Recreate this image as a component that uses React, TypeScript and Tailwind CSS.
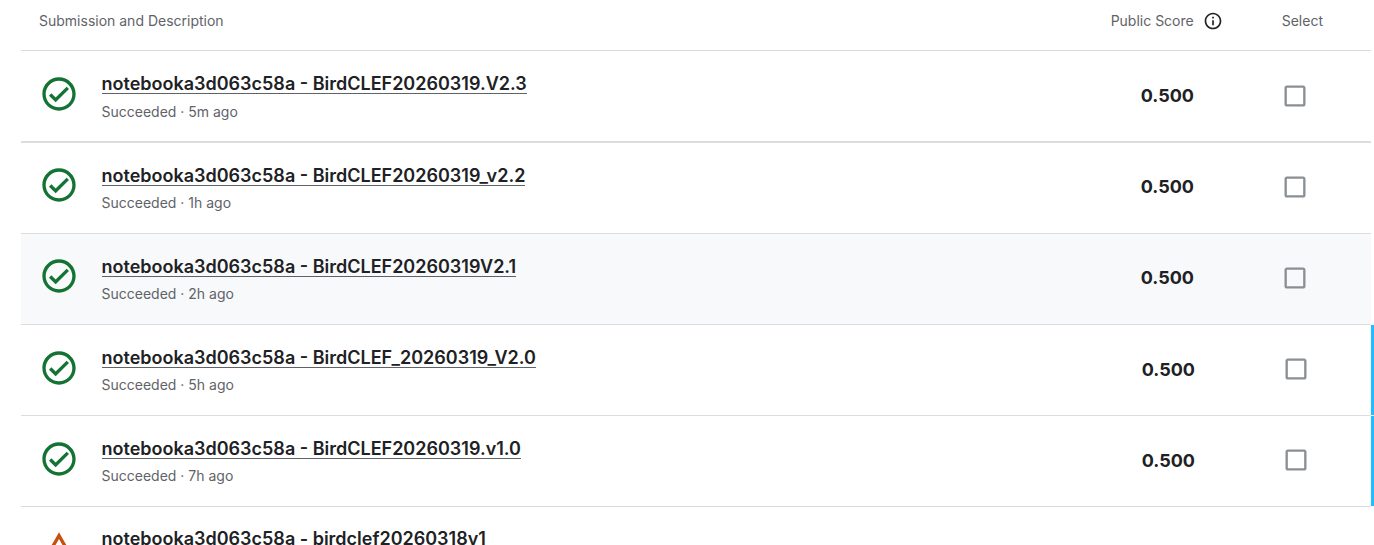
const rows = [
  { title: "notebooka3d063c58a - BirdCLEF20260319.V2.3", time: "5m ago", first: true },
  { title: "notebooka3d063c58a - BirdCLEF20260319_v2.2", time: "1h ago" },
  { title: "notebooka3d063c58a - BirdCLEF20260319V2.1", time: "2h ago", hover: true },
  { title: "notebooka3d063c58a - BirdCLEF_20260319_V2.0", time: "5h ago", isNew: true },
  { title: "notebooka3d063c58a - BirdCLEF20260319.v1.0", time: "7h ago", isNew: true },
];

function CheckCircle() {
  return (
    <svg viewBox="0 0 24 24" className="-mt-[4px] h-10 w-10 fill-[#137333]">
      <path d="M12 2C6.48 2 2 6.48 2 12s4.48 10 10 10 10-4.48 10-10S17.52 2 12 2zm0 18c-4.41 0-8-3.59-8-8s3.59-8 8-8 8 3.59 8 8-3.59 8-8 8zm4.59-12.42L10 14.17l-2.59-2.58L6 13l4 4 8-8z" />
    </svg>
  );
}

function Warning() {
  return (
    <svg viewBox="0 0 24 24" className="h-10 w-10 fill-[#c5500f]">
      <path d="M12 5.99L19.53 19H4.47L12 5.99M12 2L1 21h22L12 2zm1 14h-2v2h2v-2zm0-6h-2v4h2v-4z" />
    </svg>
  );
}

function Checkbox({ isNew }: { isNew?: boolean }) {
  return (
    <svg viewBox="0 0 24 24" className={`h-7 w-7 fill-[#8a8f94] ${isNew ? "mr-[61px] -mt-[2px]" : "mr-[62px]"}`}>
      <path d="M19 5v14H5V5h14m0-2H5c-1.1 0-2 .9-2 2v14c0 1.1.9 2 2 2h14c1.1 0 2-.9 2-2V5c0-1.1-.9-2-2-2z" />
    </svg>
  );
}

function Row({ title, time, hover, isNew, first }: { title: string; time: string; hover?: boolean; isNew?: boolean; first?: boolean }) {
  const textTop = first ? "mt-[3px]" : isNew ? "mt-[2px]" : "mt-[4px]";
  return (
    <div className={`flex w-[1353px] ${first ? "h-[92px]" : "h-[91px]"}`}>
      <div
        className={`flex flex-1 items-center border-[#dadce0] pl-[18px] ${first ? "border-b-2" : isNew ? "border-b" : "border-b pb-[2px]"} ${hover ? "bg-[#f8f9fa]" : ""}`}
      >
        <CheckCircle />
        <div className={`ml-[22.5px] flex-1 ${textTop}`}>
          <div className="flex">
            <span className="border-b border-[#5f6368] pt-[2px] text-[18px] leading-[18px] font-semibold text-[#202124]">{title}</span>
          </div>
          <div className={`text-[14px] leading-5 text-[#5f6368] ${first ? "mt-[8px]" : "mt-[7px]"}`}>Succeeded · {time}</div>
        </div>
        <div className="mr-[87px] -mt-[2px] text-[18px] font-bold text-[#202124]">0.500</div>
        <Checkbox isNew={isNew} />
      </div>
      <div className={`w-[3px] ${isNew ? "mb-px bg-[#20beff]" : ""}`} />
    </div>
  );
}

export default function App() {
  return (
    <div className="h-[545px] w-[1374px] overflow-hidden bg-white pl-[21px] font-['Inter',sans-serif]">
      <div className="flex h-[51px] w-[1350px] items-center border-b border-[#dadce0] pr-[48px] pb-[9px] pl-[18px] text-[14px] text-[#5f6368]">
        <div className="flex-1">Submission and Description</div>
        <div>Public Score</div>
        <svg viewBox="0 0 24 24" className="ml-[9px] h-5 w-5 fill-[#202124]">
          <path d="M11 7h2v2h-2zm0 4h2v6h-2zm1-9C6.48 2 2 6.48 2 12s4.48 10 10 10 10-4.48 10-10S17.52 2 12 2zm0 18c-4.41 0-8-3.59-8-8s3.59-8 8-8 8 3.59 8 8-3.59 8-8 8z" />
        </svg>
        <div className="ml-[59px]">Select</div>
      </div>
      {rows.map((row) => (
        <Row key={row.title} {...row} />
      ))}
      <div className="flex w-[1350px] items-start pt-[22px] pl-[18px]">
        <Warning />
        <span className="-mt-[1px] ml-[22.5px] text-[18px] leading-[22px] font-semibold text-[#202124]">
          notebooka3d063c58a - birdclef20260318v1
        </span>
      </div>
    </div>
  );
}
